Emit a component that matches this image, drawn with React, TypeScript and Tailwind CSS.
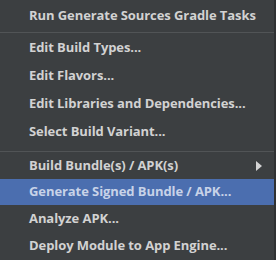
import React from 'react';

const font = { fontFamily: '"Open Sans", "Lato", sans-serif' };

function Item({ label, active, submenu, h = 'h-[27px]' }: { label: string; active?: boolean; submenu?: boolean; h?: string }) {
  return (
    <div
      className={`${h} flex items-center justify-between pl-[29px] pr-[12px] text-[13px] font-bold tracking-[-0.08px] ${
        active ? 'bg-[#4b6eaf] text-[#c8d3e8]' : 'text-[#d2d2d2]'
      }`}
    >
      <span className="whitespace-nowrap">{label}</span>
      {submenu && (
        <svg width="6" height="10" viewBox="0 0 6 10">
          <path d="M0 0 L6 5 L0 10 Z" fill="#d4d4d4" />
        </svg>
      )}
    </div>
  );
}

export default function App() {
  return (
    <div className="w-[276px] h-[260px] bg-[#2f3133] flex">
      <div className="w-[274px] h-full bg-[#3c3f41] overflow-hidden" style={font}>
        {/* top group */}
        <Item label="Run Generate Sources Gradle Tasks" h="h-[32px]" />
        <div className="h-px bg-[#515456]" />

        <div className="pt-[1px] pb-[5px]">
          <Item label="Edit Build Types..." h="h-[28px]" />
          <Item label="Edit Flavors..." h="h-[28px]" />
          <Item label="Edit Libraries and Dependencies..." h="h-[28px]" />
          <Item label="Select Build Variant..." h="h-[28px]" />
        </div>
        <div className="h-px bg-[#515456]" />

        <Item label="Build Bundle(s) / APK(s)" submenu h="h-[27px]" />
        <Item label="Generate Signed Bundle / APK..." active h="h-[26px]" />
        <Item label="Analyze APK..." />
        <Item label="Deploy Module to App Engine..." />
      </div>
    </div>
  );
}
